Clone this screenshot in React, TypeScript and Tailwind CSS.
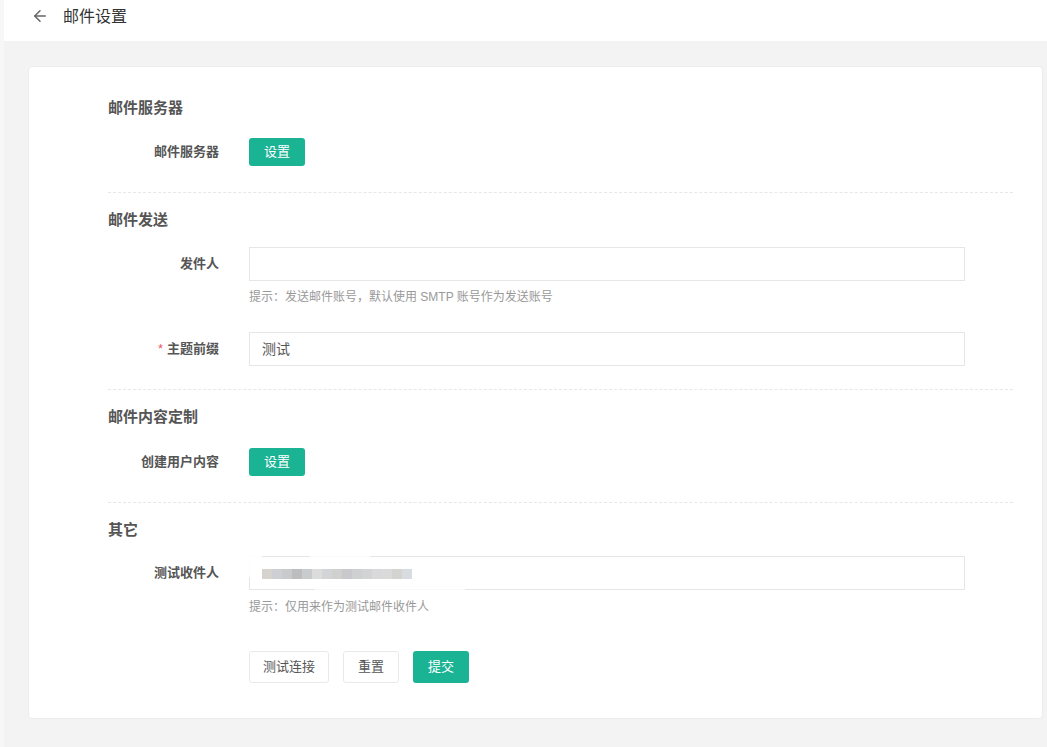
import React from "react";
import { ArrowLeft } from "lucide-react";

const font = { fontFamily: '"Liberation Sans", "Noto Sans CJK SC", sans-serif' };

function SectionTitle({ children, className = "" }: { children: React.ReactNode; className?: string }) {
  return (
    <div className={`h-[20px] leading-[20px] text-[15px] font-bold text-[#555] ${className}`}>{children}</div>
  );
}

function Label({ children, required }: { children: React.ReactNode; required?: boolean }) {
  return (
    <div className="w-[141px] shrink-0 pr-[30px] text-right text-[13px] font-bold text-[#555]">
      {required && <span className="text-[#ed5565] font-normal mr-[4px]">*</span>}
      {children}
    </div>
  );
}

function Divider({ className = "" }: { className?: string }) {
  return <div className={`border-t border-dashed border-[#e7e7e7] ${className}`} />;
}

function PrimaryBtn({ children, className = "" }: { children: React.ReactNode; className?: string }) {
  return (
    <button className={`h-[28px] w-[56px] rounded-[3px] bg-[#1ab394] text-[13px] text-white ${className}`}>{children}</button>
  );
}

const mosaic = [
  "#d6d2ce", "#ccd0d4", "#c8cacc", "#bdbdbd", "#c9cccd", "#dcdcdc", "#d2d4d6", "#d0d0cf",
  "#c9c9cd", "#cfd0d2", "#d2d3d3", "#d9d9db", "#dadada", "#d3d3cf", "#d8dbe0",
];

export default function App() {
  return (
    <div style={font} className="w-[1047px] h-[747px] flex bg-[#f3f3f4] overflow-hidden">
      <div className="w-[4px] bg-[#f7f7f7] shrink-0" />
      <div className="flex-1 flex flex-col">
        <div className="h-[41px] bg-white flex items-center shrink-0">
          <ArrowLeft className="ml-[27px] -mt-[10px] text-[#666]" size={18} strokeWidth={2} />
          <span className="ml-[14px] text-[16px] text-[#333] -mt-[8px]">邮件设置</span>
        </div>
        <div className="flex-1 pl-[24px] pr-[4px] pt-[25px]">
          <div className="bg-white border border-[#ececee] rounded-[4px] pl-[79px] pr-[29px] pt-[31px] pb-[35px]">
            <SectionTitle>邮件服务器</SectionTitle>
            <div className="mt-[20px] flex items-center">
              <Label>邮件服务器</Label>
              <PrimaryBtn>设置</PrimaryBtn>
            </div>
            <Divider className="mt-[26px]" />

            <SectionTitle className="mt-[17px]">邮件发送</SectionTitle>
            <div className="mt-[17px] flex items-center">
              <Label>发件人</Label>
              <input className="h-[34px] w-[716px] border border-[#e5e6e7] px-[12px] text-[14px] text-[#555] outline-none" />
            </div>
            <div className="mt-[7px] ml-[141px] h-[18px] leading-[18px] text-[12px] text-[#999]">
              提示：发送邮件账号，默认使用 SMTP 账号作为发送账号
            </div>
            <div className="mt-[26px] flex items-center">
              <Label required>主题前缀</Label>
              <div className="h-[34px] w-[716px] border border-[#e5e6e7] px-[12px] text-[14px] leading-[32px] text-[#555]">测试</div>
            </div>
            <Divider className="mt-[23px]" />

            <SectionTitle className="mt-[17px]">邮件内容定制</SectionTitle>
            <div className="mt-[21px] flex items-center">
              <Label>创建用户内容</Label>
              <PrimaryBtn>设置</PrimaryBtn>
            </div>
            <Divider className="mt-[26px]" />

            <SectionTitle className="mt-[17px]">其它</SectionTitle>
            <div className="mt-[16px] flex items-center">
              <Label>测试收件人</Label>
              <div className="relative h-[34px] w-[716px] border border-[#e5e6e7]">
                <div className="absolute left-[12px] top-[12px] flex">
                  {mosaic.map((c, i) => (
                    <div key={i} className="h-[10px] w-[10px]" style={{ backgroundColor: c }} />
                  ))}
                </div>
                <div className="absolute -left-[2px] -top-[2px] h-[22px] w-[14px] bg-white opacity-90" />
                <div className="absolute left-[60px] -top-[2px] h-[4px] w-[60px] bg-white opacity-80" />
                <div className="absolute left-[65px] -bottom-[2px] h-[4px] w-[150px] bg-white opacity-70" />
              </div>
            </div>
            <div className="mt-[8px] ml-[141px] h-[18px] leading-[18px] text-[12px] text-[#999]">
              提示：仅用来作为测试邮件收件人
            </div>
            <div className="mt-[35px] ml-[141px] flex items-center">
              <button className="h-[32px] w-[80px] rounded-[3px] border border-[#e7eaec] bg-white text-[13px] text-[#555]">测试连接</button>
              <button className="ml-[14px] h-[32px] w-[56px] rounded-[3px] border border-[#e7eaec] bg-white text-[13px] text-[#555]">重置</button>
              <button className="ml-[14px] h-[32px] w-[56px] rounded-[3px] bg-[#1ab394] text-[13px] text-white">提交</button>
            </div>
          </div>
        </div>
      </div>
    </div>
  );
}
